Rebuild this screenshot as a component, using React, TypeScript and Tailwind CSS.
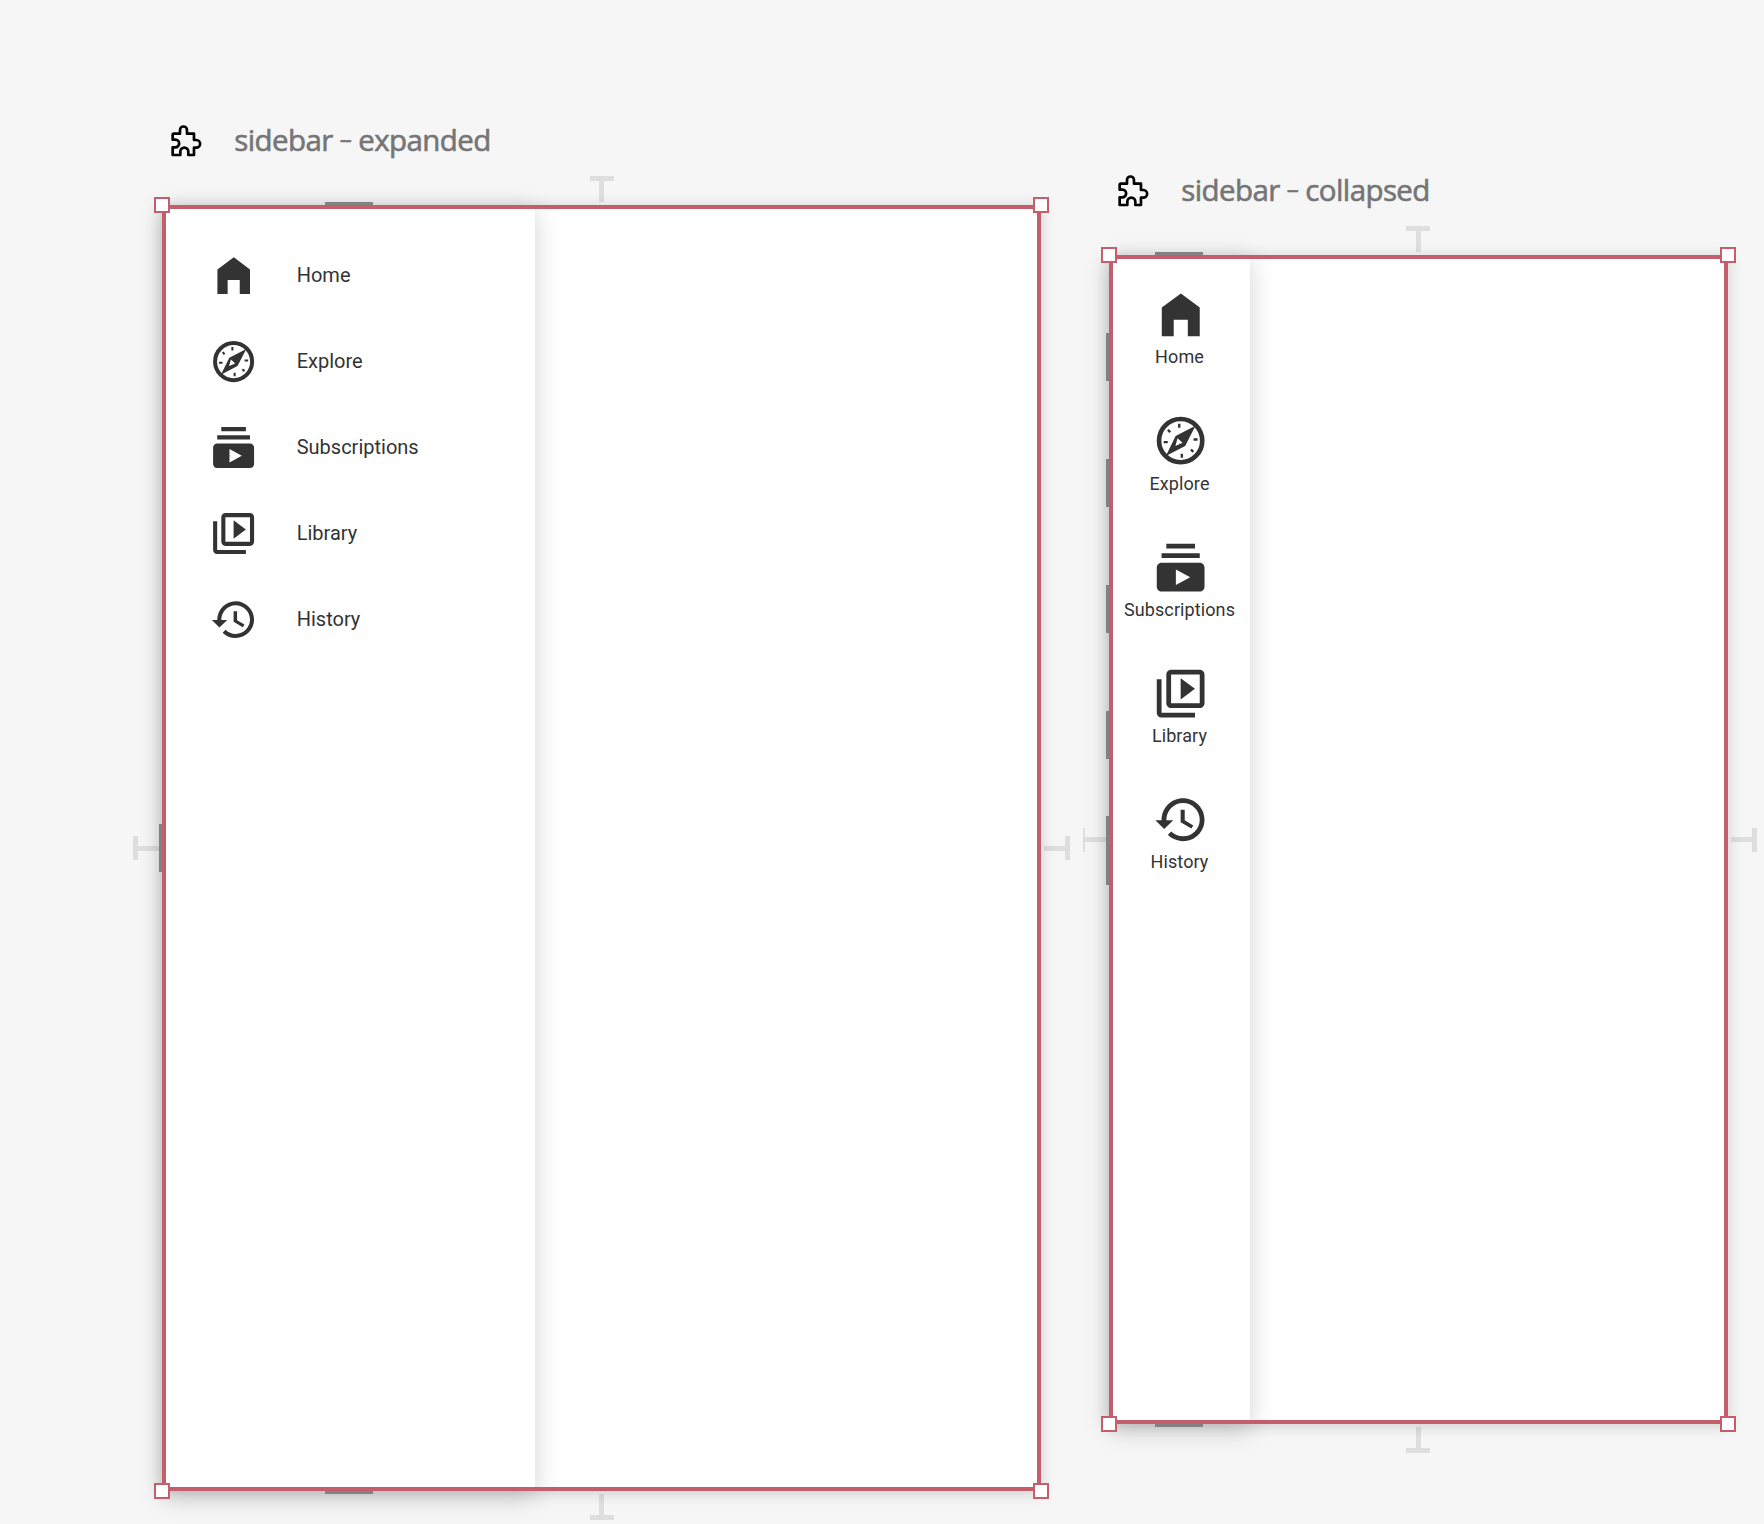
import React from "react";

type IconProps = { className: string };

const Home = ({ className }: IconProps) => (
  <svg viewBox="0 0 24 24" fill="currentColor" className={className}>
    <path d="M12.1 3.1 4.1 9v12h5v-6.9H15V21h5V9z" />
  </svg>
);

const Explore = ({ className }: IconProps) => (
  <svg viewBox="0 0 24 24" fill="none" className={className}>
    <circle cx="12" cy="12" r="9.05" stroke="currentColor" strokeWidth="1.95" />
    <path
      fillRule="evenodd"
      fill="currentColor"
      d="M18.2 5.8 9.9 10.1 5.8 18.4 13.9 14.2zM10.7 11 12.8 12.9 9.8 14.2z"
    />
    <path
      stroke="currentColor"
      strokeWidth="1"
      d="M11.4 4.9v1.7M12.5 17.5v1.7M4.9 12.6h1.7M17.4 11.5h1.7M6.7 7.4l.9 1.1M16.3 15.7l1 1"
    />
  </svg>
);

const Subscriptions = ({ className }: IconProps) => (
  <svg viewBox="0 0 24 24" fill="currentColor" className={className}>
    <path d="M20 8H4V6h16v2zm-2-6H6v2h12V2zm4 10v8c0 1.1-.9 2-2 2H4c-1.1 0-2-.9-2-2v-8c0-1.1.9-2 2-2h16c1.1 0 2 .9 2 2zm-6 4l-6-3.27v6.53L16 16z" />
  </svg>
);

const Library = ({ className }: IconProps) => (
  <svg viewBox="0 0 24 24" fill="currentColor" className={className}>
    <path d="M4 6H2v14c0 1.1.9 2 2 2h14v-2H4V6zm16-4H8c-1.1 0-2 .9-2 2v12c0 1.1.9 2 2 2h12c1.1 0 2-.9 2-2V4c0-1.1-.9-2-2-2zm0 14H8V4h12v12zM12 5.5v9l6-4.5z" />
  </svg>
);

const History = ({ className }: IconProps) => (
  <svg viewBox="0 0 24 24" fill="currentColor" className={className}>
    <path d="M13 3c-4.97 0-9 4.03-9 9.2H1.4l3.7 3.7L8.9 12.2H6C6 8.13 9.13 5 13 5s7 3.13 7 7-3.13 7-7 7c-1.93 0-3.68-.79-4.94-2.06l-1.42 1.42C8.27 19.99 10.51 21 13 21c4.97 0 9-4.03 9-9s-4.03-9-9-9zm-1 4.9v5.2l4.5 2.6.8-1.3-3.6-2.1V7.9H12z" />
  </svg>
);

const Puzzle = () => (
  <svg
    viewBox="0 0 100 100"
    className="size-[33.3px] shrink-0"
    fill="none"
    stroke="#000"
    strokeWidth="8"
    strokeLinejoin="round"
  >
    <path d="M12 29H30V18a10.5 10.5 0 0 1 21 0V29H72V48H79a11.5 11.5 0 0 1 0 23H72V93H55V83a12 12 0 0 0-24 0V93H8V70H16a11.5 11.5 0 0 0 0-23H8V33Q8 29 12 29z" />
  </svg>
);

const items = [
  { label: "Home", Icon: Home },
  { label: "Explore", Icon: Explore },
  { label: "Subscriptions", Icon: Subscriptions },
  { label: "Library", Icon: Library },
  { label: "History", Icon: History },
];

const Title = ({ state }: { state: string }) => (
  <div className="flex h-[47px] items-center self-start pl-[37px]">
    <Puzzle />
    <h2 className="-mt-px ml-[31px] whitespace-nowrap font-['Open_Sans',sans-serif] text-[29.5px] tracking-[-0.6px] text-[#757575] [-webkit-text-stroke:0.6px]">
      sidebar <span className="align-[3px] text-[24px]">–</span> {state}
    </h2>
  </div>
);

/* Constraint pin: a cap and a stem, laid along a row or a column. */
const VPin = ({ className }: IconProps) => (
  <div className={`flex w-6 items-center ${className}`}>
    <i className="h-[5px] w-6 bg-black/[0.094]" />
    <i className="h-[21px] w-[5px] bg-black/[0.094]" />
  </div>
);

const HPin = ({ className, cap }: { className: string; cap: string }) => (
  <div className={`flex h-6 shrink-0 items-center ${className}`}>
    <i className={`h-6 bg-black/[0.094] ${cap}`} />
    <i className="h-[5px] w-[21px] bg-black/[0.094]" />
  </div>
);

/* Selection outline with its four corner handles. */
const Selection = () => (
  <>
    <div className="absolute inset-0 border-4 border-[#c45e6d]" />
    <div className="absolute -inset-2 grid grid-cols-[16px_16px] grid-rows-[16px_16px] content-between justify-between">
      <i className="border-2 border-[#c45e6d] bg-white" />
      <i className="border-2 border-[#c45e6d] bg-white" />
      <i className="border-2 border-[#c45e6d] bg-white" />
      <i className="border-2 border-[#c45e6d] bg-white" />
    </div>
  </>
);

/* Short marks above and below the middle of a sidebar. */
const EndMarks = ({ className }: IconProps) => (
  <div className={`absolute -inset-y-[3px] left-0 flex flex-col items-center justify-between ${className}`}>
    <i className="h-[3px] w-12 bg-[#828282]" />
    <i className="h-[3px] w-12 bg-[#828282]" />
  </div>
);

export default function App() {
  return (
    <main className="flex h-[1524px] w-[1764px] items-start gap-[13px] overflow-hidden bg-[#f6f6f6] pl-[133px] font-[Roboto,sans-serif] text-[#333]">
      <section className="flex w-[937px] shrink-0 flex-col items-center gap-[3px] pt-[117px]">
        <Title state="expanded" />
        <VPin className="relative z-10 mt-[9px] flex-col" />
        <div className="flex items-center gap-[3px]">
          <HPin className="relative z-10" cap="w-[5px]" />
          <div className="relative h-[1286px] w-[879px] bg-white shadow-[0_2px_14px_rgba(0,0,0,0.17)]">
            <aside className="h-full w-[373px] bg-white pl-[47px] pt-[46px] shadow-[0_6px_24px_rgba(0,0,0,0.18)]">
              <ul>
                {items.map(({ label, Icon }) => (
                  <li key={label} className="flex h-[86px] items-start">
                    <Icon className="size-[49.2px] shrink-0" />
                    <span className="ml-[38.5px] text-[20px] leading-[49px]">{label}</span>
                  </li>
                ))}
              </ul>
            </aside>
            <EndMarks className="w-[374px]" />
            <div className="absolute inset-y-0 -left-[3px] flex items-center">
              <i className="h-12 w-[3px] bg-[#828282]" />
            </div>
            <Selection />
          </div>
          <HPin className="relative z-10 flex-row-reverse" cap="w-[5px]" />
        </div>
        <VPin className="relative z-10 flex-col-reverse" />
      </section>

      <section className="flex w-[674px] shrink-0 flex-col items-center gap-[3px] pt-[167px]">
        <div className="-ml-[3px] self-start">
          <Title state="collapsed" />
        </div>
        <VPin className="relative z-10 ml-[-4px] mt-[9px] flex-col" />
        <div className="flex items-center gap-[3px]">
          <HPin className="relative z-10" cap="w-[2px]" />
          <div className="relative h-[1169px] w-[619px] bg-white shadow-[0_2px_14px_rgba(0,0,0,0.17)]">
            <aside className="h-full w-[141px] bg-white pt-[31px] shadow-[0_6px_24px_rgba(0,0,0,0.18)]">
              <ul>
                {items.map(({ label, Icon }) => (
                  <li key={label} className="flex h-[126.3px] flex-col items-center">
                    <Icon className="ml-[3px] size-[57.3px] shrink-0" />
                    <span className="mt-px text-[18px] leading-[26px] tracking-[0.1px]">{label}</span>
                  </li>
                ))}
              </ul>
            </aside>
            <EndMarks className="w-[140px]" />
            <div className="absolute inset-y-0 -left-[3px] flex flex-col gap-[78px] pt-[78px]">
              <i className="h-12 w-[3px] bg-[#828282]" />
              <i className="h-12 w-[3px] bg-[#828282]" />
              <i className="h-12 w-[3px] bg-[#828282]" />
              <i className="h-12 w-[3px] bg-[#828282]" />
              <i className="-mt-[21px] h-[69px] w-[3px] bg-[#828282]" />
            </div>
            <Selection />
          </div>
          <HPin className="relative z-10 flex-row-reverse" cap="w-[5px]" />
        </div>
        <VPin className="relative z-10 ml-[-4px] flex-col-reverse" />
      </section>
    </main>
  );
}
